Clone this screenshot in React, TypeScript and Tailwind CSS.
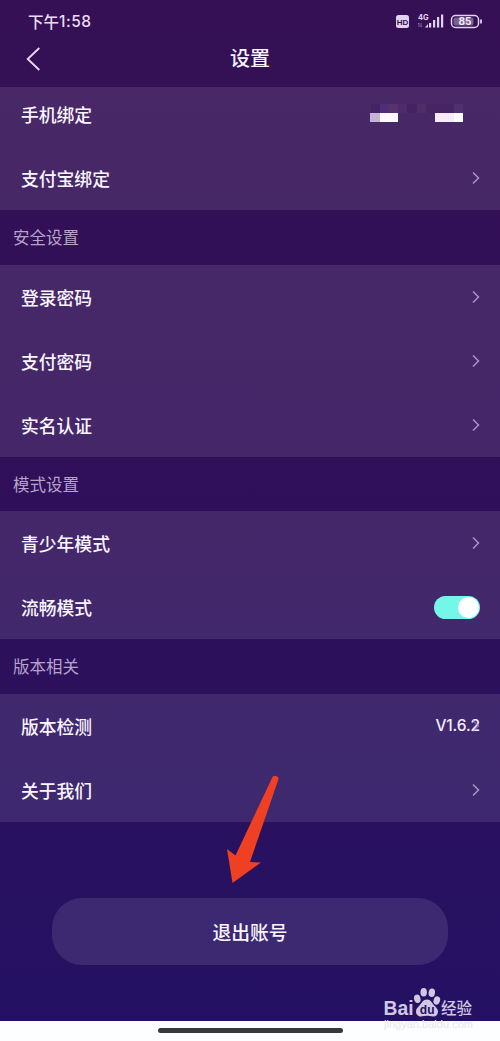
import { type ReactNode } from "react";

const Arrow = () => (
  <svg className="h-[14px] w-[9px]" viewBox="0 0 9 14" fill="none">
    <path d="M2 1.500 7.500 7l-5.500 5.500" stroke="#a995ca" strokeWidth="1.500" />
  </svg>
);

const MaskedPhone = () => (
  <svg className="h-[22px] w-[100px]" viewBox="0 0 100 22" shapeRendering="crispEdges">
    <path d="M1 1h9v9H1z" fill="#452267" />
    <path d="M10 1h9v9h-9z" fill="#502d78" />
    <path d="M19 1h9v9h-9z" fill="#57326b" />
    <path d="M28 1h9v9h-9z" fill="#4e2b6a" />
    <path d="M37 1h10v9H37z" fill="#442264" />
    <path d="M47 1h9v9h-9z" fill="#4e2d68" />
    <path d="M56 1h28v9H56z" fill="#472565" />
    <path d="M84 1h9v9h-9z" fill="#50306f" />
    <path d="M0 10h10v9H0z" fill="#c4b2d8" />
    <path d="M10 10h18v9H10z" fill="#fffaff" />
    <path d="M65 10h19v9H65z" fill="#f8ecfb" />
    <path d="M84 10h9v9h-9z" fill="#fff" />
  </svg>
);

function Row({ label, children }: { label: string; children?: ReactNode }) {
  return (
    <div className="flex h-16 shrink-0 items-center justify-between pl-[21px] pr-5">
      <span className="pt-px text-[17.8px] font-medium text-[#faf5ff]">{label}</span>
      {children ?? <Arrow />}
    </div>
  );
}

function SectionTitle({ children }: { children: ReactNode }) {
  return <h2 className="flex h-[54.5px] items-center pl-[13px] pt-px text-[16.5px] text-[#b5a3c9]">{children}</h2>;
}

function StatusBar() {
  return (
    <div className="flex h-[30px] items-end justify-between pl-[28px] pr-[17px]">
      <span className="flex items-center text-[15.5px] font-medium leading-[17px] text-[#eadcf5]">
        下午
        <span className="pt-px font-['Inter',sans-serif] text-[15.5px] tracking-[0.5px]">1:58</span>
      </span>
      <svg className="h-[18px] w-[87px]" viewBox="0 0 87 18">
        <rect x="0" y="3" width="13" height="13" rx="2.5" fill="#e2d2ef" />
        <text x="6.5" y="12.5" textAnchor="middle" fontSize="8" fontWeight="700" fill="#351052" fontFamily="Liberation Sans, sans-serif">HD</text>
        <text x="22" y="7.5" fontSize="7.5" fontWeight="700" fill="#e2d2ef" fontFamily="Inter, sans-serif">4G</text>
        <path d="M23 11v4m-1-3 1-1m2 0v4m1-1-1 1" stroke="#9882b1" strokeWidth=".8" fill="none" />
        <path d="M29 15.500 32 12v3.500zM33 11h2.200v4.500H33zM37 8h2.200v7.500H37zM41 5h2.200v10.500H41zM45 2.500h2.200v13H45z" fill="#e2d2ef" />
        <rect x="55.500" y="3.500" width="27" height="12" rx="4" fill="none" stroke="#e2d2ef" strokeWidth="1.500" />
        <rect x="57.500" y="5.500" width="20" height="8" rx="2" fill="#79618d" />
        <path d="M85 7.500v4" stroke="#e2d2ef" strokeWidth="1.800" />
        <text x="69" y="13.300" textAnchor="middle" fontSize="10" fontWeight="700" fill="#f5eafc" fontFamily="Inter, sans-serif">85</text>
      </svg>
    </div>
  );
}

function Watermark() {
  return (
    <svg className="absolute left-[380px] top-[984px] h-[50px] w-[100px]" viewBox="0 0 100 50" fill="#d2c7e3">
      <text x="3.500" y="31" fontSize="20.500" fontWeight="700" textLength="30" lengthAdjust="spacingAndGlyphs" fontFamily="Liberation Sans, sans-serif">Bai</text>
      <ellipse cx="37.300" cy="14.800" rx="3.200" ry="4.200" transform="rotate(-14 37.300 14.800)" />
      <ellipse cx="43.700" cy="8.300" rx="3.200" ry="4.300" />
      <ellipse cx="51.800" cy="8.800" rx="3.200" ry="4.300" transform="rotate(8 51.800 8.800)" />
      <ellipse cx="56.800" cy="16.500" rx="3.200" ry="4.200" transform="rotate(18 56.800 16.500)" />
      <path d="M47 15.500c-4 0-5.200 3.500-7.500 6-2 2-3.500 3.300-3.500 6 0 3.500 2.500 5 5 5 2 0 4-.7 6-.7s4 .7 6.200.7c3 0 4.800-2 4.800-5 0-2.500-1.800-4-3.500-5.800-2.500-2.500-3.500-6.200-7.500-6.200z" />
      <text x="39.800" y="30" fontSize="12" fontWeight="700" fill="#25105f" fontFamily="Liberation Sans, sans-serif">du</text>
      <text x="61" y="30" fontSize="15.500" fontWeight="500" fontFamily="Noto Sans CJK SC, sans-serif">经验</text>
      <text x="4" y="43.500" fontSize="11" fill="#e8e6ed" textLength="89" fontFamily="Liberation Sans, sans-serif">jingyan.baidu.com</text>
    </svg>
  );
}

export default function App() {
  return (
    <div className="relative flex h-[1041px] w-[500px] flex-col overflow-hidden bg-[#fcfeff] font-['Noto_Sans_CJK_SC',sans-serif]">
      <main className="h-[1020.5px] bg-linear-to-b from-[#351054] via-[#2f0f59] to-[#241163]">
        <StatusBar />
        <header className="grid h-[57px] grid-cols-3 items-center">
          <svg className="ml-[26px] h-6 w-[15px]" viewBox="0 0 15 24" fill="none">
            <path d="M13.300 1 1.700 12l11.600 11" stroke="#eadcf5" strokeWidth="1.800" />
          </svg>
          <h1 className="pb-0.5 text-center text-[20px] font-medium text-[#faf5ff]">设置</h1>
        </header>

        <section className="flex h-[123px] flex-col justify-end overflow-hidden bg-[#ffffff1a]">
          <Row label="手机绑定">
            <div className="mr-[10px]">
              <MaskedPhone />
            </div>
          </Row>
          <Row label="支付宝绑定" />
        </section>

        <SectionTitle>安全设置</SectionTitle>
        <section className="bg-[#ffffff1a]">
          <Row label="登录密码" />
          <Row label="支付密码" />
          <Row label="实名认证" />
        </section>

        <SectionTitle>模式设置</SectionTitle>
        <section className="bg-[#ffffff1a]">
          <Row label="青少年模式" />
          <Row label="流畅模式">
            <div className="flex h-[23px] w-[46px] items-center justify-end rounded-full bg-[#75f7e8] pr-px">
              <div className="size-[21px] rounded-full bg-white" />
            </div>
          </Row>
        </section>

        <SectionTitle>版本相关</SectionTitle>
        <section className="bg-[#ffffff1a]">
          <Row label="版本检测">
            <div className="relative flex items-center">
              <span className="pt-px font-['Inter',sans-serif] text-[15.5px] font-medium tracking-[-0.1px] text-[#f5edff]">V1.6.2</span>
              <span className="absolute right-0 opacity-60">
                <Arrow />
              </span>
            </div>
          </Row>
          <Row label="关于我们" />
        </section>

        <button className="mx-auto mt-[76px] flex h-[67px] w-[396px] items-center justify-center rounded-[30px] bg-[#ffffff1a] pt-0.5 text-[18.8px] font-medium text-[#faf5ff]">
          退出账号
        </button>
      </main>

      <div className="mx-auto mt-[7px] h-[5px] w-[185px] rounded-full bg-[#37393b]" />

      <svg className="absolute left-[223.5px] top-[772px] h-[112px] w-[58px]" viewBox="0 0 58 112" fill="#ef4023">
        <path d="M48 6q1-2.800 4-2 3.200.9 2.300 3.700L26 90l11 .5L8.500 111 3 77l8.500 6.500z" />
      </svg>
      <Watermark />
    </div>
  );
}
